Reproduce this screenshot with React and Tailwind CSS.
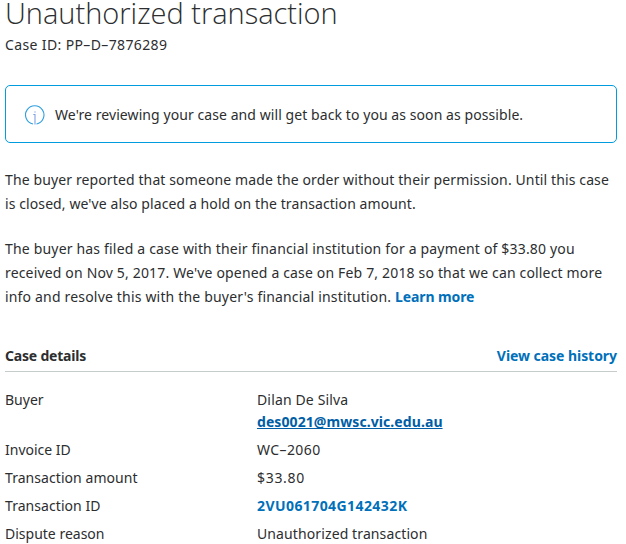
const linkClass = "font-bold text-[#0070ba]";

function InfoIcon() {
  return (
    <svg className="mt-0.5 h-5 w-5 shrink-0" viewBox="0 0 20 20" fill="none" stroke="#2f9fe0">
      <path d="M8 19A9.2 9.2 0 1 1 11.5 19" strokeWidth="1.1" />
      <path d="M8.3 9.5H10V19.5" stroke="#7fa0e4" strokeWidth="1.1" />
      <path d="M10 6.4V7.6" stroke="#7fa0e4" strokeWidth="1.3" />
    </svg>
  );
}

function Row({ label, children }) {
  return (
    <div className="mb-1.5 flex leading-[22px]">
      <dt className="w-[252px] shrink-0">{label}</dt>
      <dd>{children}</dd>
    </div>
  );
}

export default function App() {
  return (
    <main className="h-[544px] overflow-hidden bg-white pr-[9px] pl-[5px] font-['Noto_Sans',sans-serif] text-sm text-[#2c2e2f]">
      <h1 className="h-[33px] text-[29px] leading-[26px] font-light whitespace-nowrap font-['Open_Sans',sans-serif]">
        Unauthorized transaction
      </h1>
      <p className="leading-6 tracking-[0.37px]">Case ID: PP–D–7876289</p>
      <div className="mt-7 flex h-[58px] items-center rounded-[5px] border border-[#009cde] pl-[19px]">
        <InfoIcon />
        <p className="ml-[10px] pt-0.5 tracking-[0.075px] whitespace-nowrap">We're reviewing your case and will get back to you as soon as possible.</p>
      </div>
      <p className="mt-[25px] leading-6 whitespace-nowrap">
        <span className="block tracking-[0.12px]">The buyer reported that someone made the order without their permission. Until this case</span>
        <span className="block tracking-[0.095px]">is closed, we've also placed a hold on the transaction amount.</span>
      </p>
      <p className="mt-[21px] leading-6 whitespace-nowrap">
        <span className="block tracking-[0.18px]">The buyer has filed a case with their financial institution for a payment of $33.80 you</span>
        <span className="block tracking-[0.165px]">received on Nov 5, 2017. We've opened a case on Feb 7, 2018 so that we can collect more</span>
        <span className="block tracking-[0.18px]">info and resolve this with the buyer's financial institution. <a className={`${linkClass} tracking-[-0.1px]`}>Learn more</a></span>
      </p>
      <div className="mt-[35px] flex h-[28px] justify-between border-b border-[#c6cccc] leading-6">
        <h2 className="font-bold tracking-[-0.2px]">Case details</h2>
        <a className={`${linkClass} tracking-[-0.05px]`}>View case history</a>
      </div>
      <dl className="mt-[17px]">
        <Row label="Buyer">
          <span className="block tracking-[0.15px]">Dilan De Silva</span>
          <a className="block font-bold tracking-[0.08px] text-[#005ea6] underline">des0021@mwsc.vic.edu.au</a>
        </Row>
        <Row label="Invoice ID"><span className="tracking-[0.4px]">WC–2060</span></Row>
        <Row label={<span className="tracking-[0.06px]">Transaction amount</span>}><span className="tracking-[0.7px]">$33.80</span></Row>
        <Row label={<span className="tracking-[0.06px]">Transaction ID</span>}><a className={`${linkClass} tracking-[0.42px]`}>2VU061704G142432K</a></Row>
        <Row label="Dispute reason"><span className="tracking-[0.11px]">Unauthorized transaction</span></Row>
      </dl>
    </main>
  );
}
